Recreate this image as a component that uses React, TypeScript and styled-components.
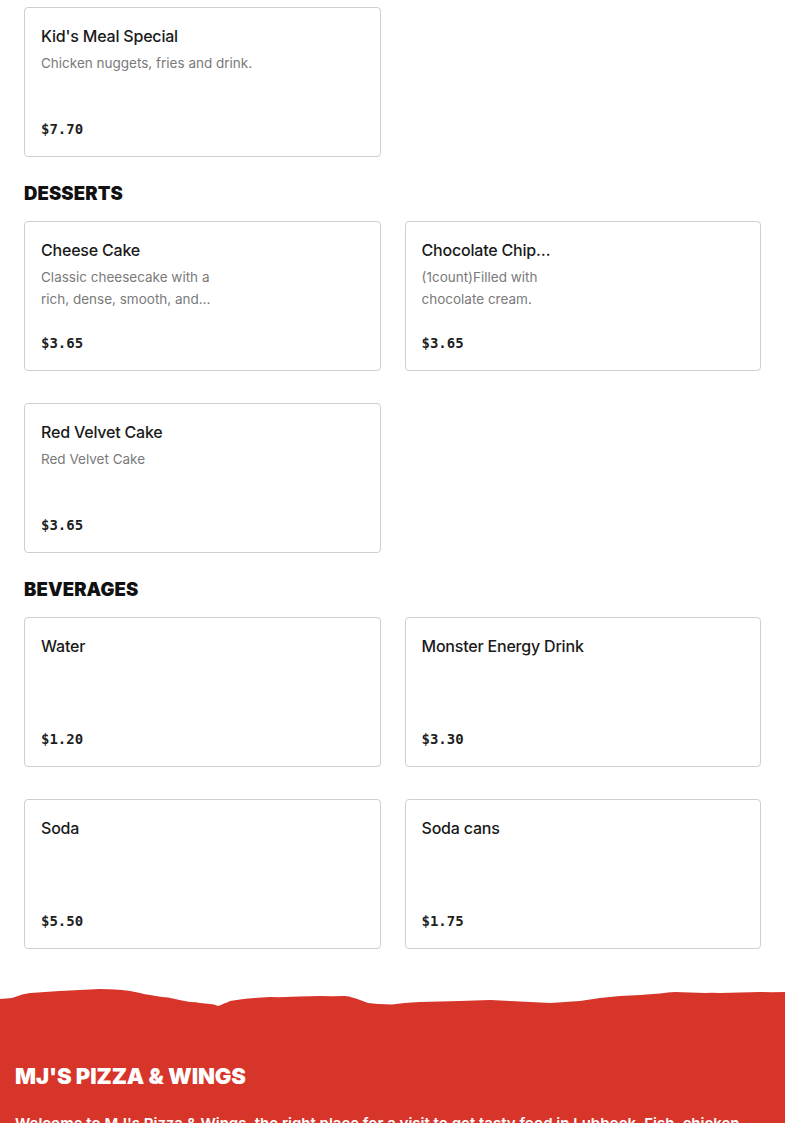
import React from "react";
import styled, { createGlobalStyle } from "styled-components";

const GlobalStyle = createGlobalStyle`
  html, body { margin: 0; padding: 0; background: #fff; }
  body { font-family: Inter, "Noto Sans", Arial, sans-serif; color: #222; }
  * { box-sizing: border-box; }
`;

type Item = { name: string; desc?: string; price: string; narrow?: boolean };
type Section = { title?: string; items: Item[] };

const sections: Section[] = [
  { items: [{ name: "Kid's Meal Special", desc: "Chicken nuggets, fries and drink.", price: "$7.70" }] },
  {
    title: "DESSERTS",
    items: [
      { name: "Cheese Cake", desc: "Classic cheesecake with a rich, dense, smooth, and creamy consistency.", price: "$3.65", narrow: true },
      { name: "Chocolate Chip Cookies", desc: "(1count)Filled with chocolate cream.", price: "$3.65", narrow: true },
      { name: "Red Velvet Cake", desc: "Red Velvet Cake", price: "$3.65" },
    ],
  },
  {
    title: "BEVERAGES",
    items: [
      { name: "Water", price: "$1.20" },
      { name: "Monster Energy Drink", price: "$3.30" },
      { name: "Soda", price: "$5.50" },
      { name: "Soda cans", price: "$1.75" },
    ],
  },
];

const Page = styled.div`
  padding-top: 7px;
`;

const Menu = styled.main`
  padding: 0 24px;
`;

const SectionTitle = styled.h2`
  margin: 24px 0 16px;
  font-family: Inter, Arial, sans-serif;
  font-weight: 900;
  font-size: 18.5px;
  line-height: 24px;
  letter-spacing: 0.1px;
  color: #111;
`;

const Grid = styled.div`
  display: grid;
  grid-template-columns: 1fr 1fr;
  column-gap: 24px;
  row-gap: 32px;
`;

const Card = styled.article`
  height: 150px;
  border: 1px solid #cfcfcf;
  border-radius: 4px;
  padding: 16px 16px 17px;
  display: flex;
  flex-direction: column;
  background: #fff;
`;

const TextCol = styled.div<{ $narrow?: boolean }>`
  display: flex;
  flex-direction: column;
  max-width: ${(p) => (p.$narrow ? "176px" : "100%")};
`;

const Name = styled.h3`
  margin: 0;
  max-height: 24px;
  font-family: Inter, Arial, sans-serif;
  font-weight: 500;
  font-size: 16px;
  line-height: 24px;
  letter-spacing: -0.2px;
  color: #1a1a1a;
  display: -webkit-box;
  -webkit-line-clamp: 1;
  -webkit-box-orient: vertical;
  overflow: hidden;
`;

const Desc = styled.p`
  margin: 4px 0 0;
  max-height: 44px;
  font-family: Inter, Arial, sans-serif;
  font-size: 13.5px;
  line-height: 22px;
  color: #7a7a7a;
  display: -webkit-box;
  -webkit-line-clamp: 2;
  -webkit-box-orient: vertical;
  overflow: hidden;
`;

const Price = styled.div`
  margin-top: auto;
  font-family: "DejaVu Sans Mono", "Liberation Mono", monospace;
  font-weight: 700;
  font-size: 14px;
  line-height: 20px;
  color: #1f1f1f;
`;

const Footer = styled.footer`
  margin-top: 36px;
`;

const Torn = styled.svg`
  display: block;
  width: 100%;
  height: 24px;
`;

const FooterBody = styled.div`
  background: #d7342a;
  padding: 53px 15px 40px;
  color: #fff;
`;

const Brand = styled.h2`
  margin: 0;
  font-family: Inter, Arial, sans-serif;
  font-weight: 900;
  font-size: 22px;
  line-height: 28px;
  letter-spacing: -0.1px;
  text-transform: uppercase;
`;

const About = styled.p`
  margin: 22px 0 0;
  font-family: Inter, Arial, sans-serif;
  font-weight: 600;
  font-size: 15px;
  line-height: 24px;
`;

const edge =
  "M0 14 L6 13.6 L12 13 L18 11 L22 9.5 L30 8 L38 7.5 L45 7 L52 6.6 L60 6 L70 5.6 L80 5 L90 4.6 L100 4 L108 4.3 L115 4.5 L122 5 L130 6 L135 7 L140 8 L145 9.2 L150 10 L156 11 L162 12 L168 12.6 L175 14 L182 15.4 L190 17 L196 17.3 L200 18 L205 18.4 L210 19 L214 19.6 L218 21 L221 20 L224 18.5 L227 17.4 L230 16 L235 15.2 L240 14.5 L248 13.6 L255 13 L262 12.5 L270 12 L278 12.3 L285 12 L292 11.8 L300 11.5 L310 11.3 L320 11 L332 11.2 L345 11 L349 11.6 L352 12.5 L356 13.5 L360 15 L364 16.5 L368 18 L373 18.4 L378 19 L385 19.2 L392 19.5 L398 18.8 L405 18 L412 17.6 L420 17 L430 16.8 L440 16.5 L450 16.3 L460 16 L475 15.6 L490 15 L500 15.6 L510 16 L520 16.6 L530 17 L540 17.6 L550 18 L558 17.5 L565 17 L572 16.6 L580 16 L590 14.6 L600 13 L610 12 L620 11 L630 10.6 L640 10 L650 9.2 L660 8.5 L668 7.6 L675 7 L682 7.3 L690 7.5 L698 7.8 L705 8 L712 7.7 L720 8 L730 7.8 L740 7.5 L750 7.2 L760 7 L772 7.3 L785 7 L785 24 L0 24 Z";

export default function App() {
  return (
    <Page>
      <GlobalStyle />
      <Menu>
        {sections.map((s, i) => (
          <section key={i}>
            {s.title && <SectionTitle>{s.title}</SectionTitle>}
            <Grid>
              {s.items.map((it) => (
                <Card key={it.name}>
                  <TextCol $narrow={it.narrow}>
                    <Name>{it.name}</Name>
                    {it.desc && <Desc>{it.desc}</Desc>}
                  </TextCol>
                  <Price>{it.price}</Price>
                </Card>
              ))}
            </Grid>
          </section>
        ))}
      </Menu>
      <Footer>
        <Torn viewBox="0 0 785 24" preserveAspectRatio="none" aria-hidden="true">
          <path d={edge} fill="#d7342a" />
        </Torn>
        <FooterBody>
          <Brand>MJ's Pizza &amp; Wings</Brand>
          <About>
            Welcome to MJ's Pizza &amp; Wings, the right place for a visit to get tasty food in Lubbock. Fish, chicken, wings and more are waiting for you.
          </About>
        </FooterBody>
      </Footer>
    </Page>
  );
}
